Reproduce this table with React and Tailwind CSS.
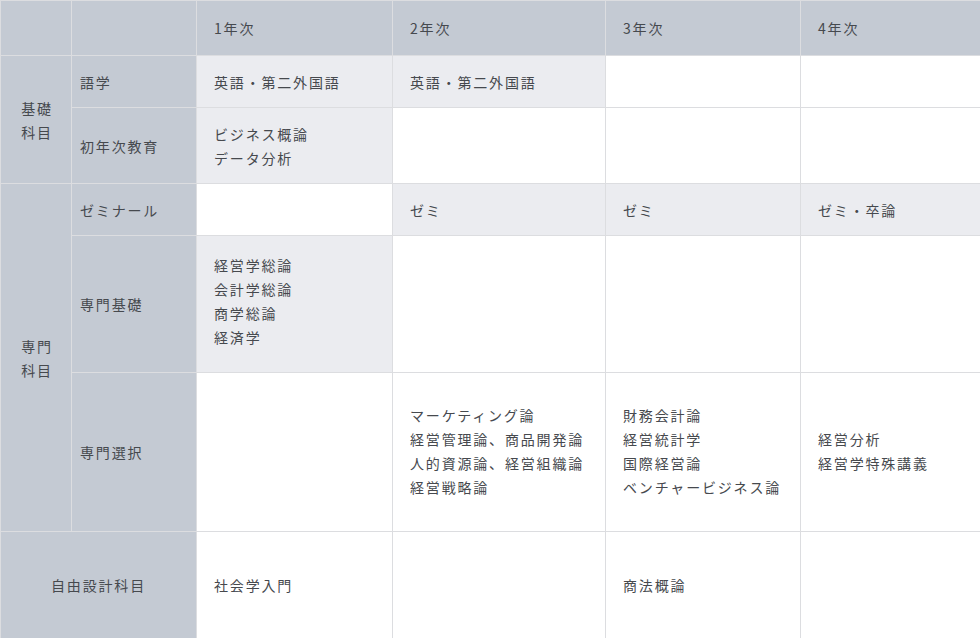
const years = ["1年次", "2年次", "3年次", "4年次"];

const rows = [
  { group: "基礎\n科目", groupSpan: 2, label: "語学", h: "h-[52px]", cells: [["英語・第二外国語"], ["英語・第二外国語"], [], []], light: [0, 1] },
  { label: "初年次教育", h: "h-[76px]", cells: [["ビジネス概論", "データ分析"], [], [], []], light: [0] },
  { group: "専門\n科目", groupSpan: 3, label: "ゼミナール", h: "h-[52px]", cells: [[], ["ゼミ"], ["ゼミ"], ["ゼミ・卒論"]], light: [1, 2, 3] },
  { label: "専門基礎", h: "h-[137px]", pad: "pb-[6px]", cells: [["経営学総論", "会計学総論", "商学総論", "経済学"], [], [], []], light: [0] },
  {
    label: "専門選択",
    h: "h-[159px]",
    pad: "pb-[2px]",
    cells: [
      [],
      ["マーケティング論", "経営管理論、商品開発論", "人的資源論、経営組織論", "経営戦略論"],
      ["財務会計論", "経営統計学", "国際経営論", "ベンチャービジネス論"],
      ["経営分析", "経営学特殊講義"],
    ],
    light: [],
  },
];

const cellBase = "border border-[#dcdde0] align-middle";

export default function App() {
  return (
    <div className="w-[980px] h-[638px] bg-white text-[14px] leading-[24px] tracking-[0.13em] text-[#46494e]" style={{ fontFamily: '"Noto Sans CJK JP", "Noto Sans", sans-serif' }}>
      <table className="table-fixed border-collapse w-[980px]">
        <colgroup>
          <col className="w-[71px]" />
          <col className="w-[125px]" />
          <col className="w-[196px]" />
          <col className="w-[213px]" />
          <col className="w-[195px]" />
          <col className="w-[180px]" />
        </colgroup>
        <tbody>
          <tr className="h-[55px]">
            <td className={`${cellBase} bg-[#c4cad3]`}></td>
            <td className={`${cellBase} bg-[#c4cad3]`}></td>
            {years.map((y) => (
              <td key={y} className={`${cellBase} bg-[#c4cad3] pl-[17px]`}>{y}</td>
            ))}
          </tr>
          {rows.map((r) => (
            <tr key={r.label} className={r.h}>
              {r.group && (
                <td rowSpan={r.groupSpan} className={`${cellBase} bg-[#c4cad3] text-center whitespace-pre-line pl-[2px]`}>
                  {r.group}
                </td>
              )}
              <td className={`${cellBase} bg-[#c4cad3] pl-[8px]`}>{r.label}</td>
              {r.cells.map((lines, i) => (
                <td key={i} className={`${cellBase} pl-[17px] ${r.pad || ""} ${r.light.includes(i) ? "bg-[#ebecf0]" : "bg-white"}`}>
                  {lines.map((l) => (
                    <div key={l} className="whitespace-nowrap">{l}</div>
                  ))}
                </td>
              ))}
            </tr>
          ))}
          <tr className="h-[107px]">
            <td colSpan={2} className={`${cellBase} bg-[#c4cad3] text-center`}>自由設計科目</td>
            <td className={`${cellBase} bg-white pl-[17px]`}>社会学入門</td>
            <td className={`${cellBase} bg-white`}></td>
            <td className={`${cellBase} bg-white pl-[17px]`}>商法概論</td>
            <td className={`${cellBase} bg-white`}></td>
          </tr>
        </tbody>
      </table>
    </div>
  );
}
